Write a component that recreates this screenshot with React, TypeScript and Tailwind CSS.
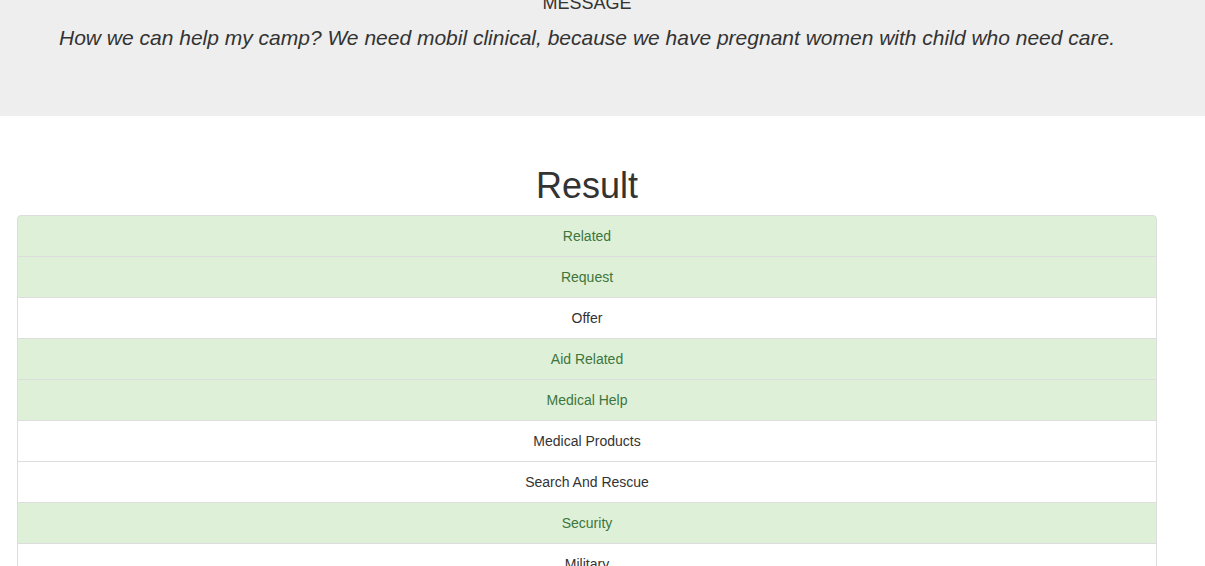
const categories = [
  { name: 'Related', hit: true },
  { name: 'Request', hit: true },
  { name: 'Offer', hit: false },
  { name: 'Aid Related', hit: true },
  { name: 'Medical Help', hit: true },
  { name: 'Medical Products', hit: false },
  { name: 'Search And Rescue', hit: false },
  { name: 'Security', hit: true },
  { name: 'Military', hit: false },
  { name: 'Child Alone', hit: false },
  { name: 'Water', hit: false },
];

export default function App() {
  return (
    <div className="min-h-screen bg-white text-[#333] font-['Liberation_Sans',Arial,sans-serif] text-[14px] leading-[20px] overflow-hidden">
      {/* jumbotron, page scrolled a little so the heading is cut */}
      <div className="bg-[#eee] pb-[48px] mb-[50px]">
        <div className="w-[1140px] ml-[17px]">
          <div className="mt-[-7px] mb-[10px] text-center text-[18px] leading-[20px] text-[#333]">
            MESSAGE
          </div>
          <p className="mb-[15px] text-center text-[21px] leading-[30px] italic">
            How we can help my camp? We need mobil clinical, because we have pregnant women with child who need care.
          </p>
        </div>
      </div>

      <div className="w-[1140px] ml-[17px]">
        <h1 className="mb-[9px] text-center text-[36px] leading-[1.1] font-medium">Result</h1>
        <ul>
          {categories.map((c, i) => (
            <li
              key={c.name}
              className={
                'mb-[-1px] border border-[#ddd] px-[15px] py-[10px] text-center ' +
                (c.hit ? 'bg-[#dff0d8] text-[#3c763d] ' : 'bg-white text-[#333] ') +
                (i === 0 ? 'rounded-t-[4px]' : '')
              }
            >
              {c.name}
            </li>
          ))}
        </ul>
      </div>
    </div>
  );
}
